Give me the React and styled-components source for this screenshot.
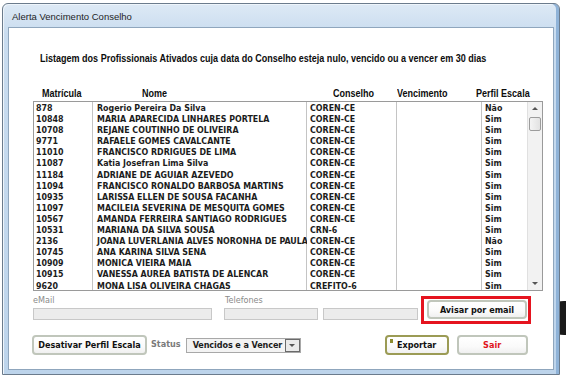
import React from "react";
import styled, { createGlobalStyle } from "styled-components";

const Global = createGlobalStyle`
  html, body { margin: 0; padding: 0; background: #ffffff; overflow: hidden; }
  * { box-sizing: border-box; }
`;

const CELL_FONT = `"DejaVu Sans Condensed", "DejaVu Sans", "Liberation Sans", sans-serif`;
const NARROW_FONT = `"Liberation Sans", Arial, sans-serif`;

const Desktop = styled.div`
  position: relative;
  width: 566px;
  height: 378px;
  padding: 3px 0 0 2px;
  background: #ffffff;
`;

const Blob = styled.div`
  position: absolute;
  left: 546px;
  top: 301px;
  width: 36px;
  height: 34px;
  border-radius: 50%;
  background: #1a1a1a;
  z-index: 0;
`;

const Window = styled.div`
  position: relative;
  z-index: 1;
  width: 558px;
  height: 372px;
  border: 1px solid #6b7b8c;
  border-radius: 6px 6px 0 0;
  background: linear-gradient(180deg, #dde9f5 0%, #c9dcef 8%, #bdd4eb 100%);
  padding: 0 5px 4px 5px;
  display: flex;
  flex-direction: column;
  box-shadow: inset -3px 0 0 #8fb3d8, inset 1px 1px 0 #eef5fb;
`;

const TitleBar = styled.div`
  height: 23px;
  display: flex;
  align-items: center;
  padding: 2px 0 0 4px;
  font-family: "Liberation Sans", sans-serif;
  font-size: 9.5px;
  color: #1e1e1e;
`;

const Client = styled.div`
  flex: 1;
  background: #ffffff;
  border: 1px solid #8fa6bd;
  display: flex;
  flex-direction: column;
  padding-left: 24px;
`;

/* Arial Narrow Bold look: Liberation Sans Bold condensed to 82% */
const Narrow = styled.span`
  display: inline-block;
  transform: scaleX(0.82);
  transform-origin: left center;
  white-space: nowrap;
`;

const Heading = styled.div`
  margin: 24px 0 0 7px;
  height: 13px;
  font-family: ${NARROW_FONT};
  font-weight: bold;
  font-size: 11px;
  line-height: 13px;
  color: #0d0d0d;
  white-space: nowrap;
`;

const HeaderRow = styled.div`
  margin: 22px 0 0 9px;
  height: 12px;
  display: flex;
  font-family: ${NARROW_FONT};
  font-weight: bold;
  font-size: 11px;
  line-height: 12px;
  color: #0d0d0d;
`;

const HeaderLabel = styled.div`
  width: ${(p) => p.$w}px;
  flex: none;
  white-space: nowrap;
`;

const Grid = styled.div`
  margin-top: 2px;
  width: 510px;
  height: 190px;
  border: 1px solid #9a9a9a;
  display: flex;
  overflow: hidden;
`;

const Rows = styled.div`
  flex: 1;
  display: flex;
  flex-direction: column;
  padding-top: 1px;
  background: linear-gradient(90deg,
    transparent 58px, #c4c4c4 58px, #c4c4c4 59px, transparent 59px,
    transparent 272px, #c4c4c4 272px, #c4c4c4 273px, transparent 273px,
    transparent 362px, #c4c4c4 362px, #c4c4c4 363px, transparent 363px,
    transparent 447px, #c4c4c4 447px, #c4c4c4 448px, transparent 448px);
`;

const Row = styled.div`
  height: 11.1px;
  flex: none;
  display: grid;
  grid-template-columns: 59px 214px 90px 85px 45px;
  font-family: ${CELL_FONT};
  font-weight: bold;
  font-size: 8.8px;
  line-height: 11px;
  color: #1c1c1c;
`;

const Cell = styled.div`
  padding-left: ${(p) => p.$pad}px;
  white-space: nowrap;
  overflow: hidden;
`;

const ScrollBar = styled.div`
  width: 15px;
  flex: none;
  background: #f2f2f2;
  border-left: 1px solid #e0e0e0;
  display: flex;
  flex-direction: column;
  align-items: center;
  padding-top: 5px;
`;

const Arrow = styled.div`
  width: 0;
  height: 0;
  border-left: 3px solid transparent;
  border-right: 3px solid transparent;
  ${(p) => (p.$down ? "border-top: 3px solid #555;" : "border-bottom: 3px solid #555;")}
`;

const Thumb = styled.div`
  margin-top: 7px;
  width: 12px;
  height: 14px;
  border: 1px solid #9c9c9c;
  border-radius: 2px;
  background: linear-gradient(90deg, #f4f4f4, #e2e2e2);
`;

const Spacer = styled.div`
  flex: 1;
`;

const BottomGap = styled.div`
  height: 5px;
  flex: none;
`;

const FormArea = styled.div`
  display: flex;
  align-items: flex-start;
  height: 33px;
`;

const Fields = styled.div`
  margin-top: 3px;
  display: grid;
  grid-template-columns: 191px 99px 95px;
  row-gap: 2px;
`;

const FieldLabel = styled.div`
  font-family: ${CELL_FONT};
  font-size: 9px;
  line-height: 12px;
  color: #8a8a8a;
  grid-column: ${(p) => p.$col};
  grid-row: 1;
  padding-left: ${(p) => p.$pad || 0}px;
`;

const Input = styled.div`
  height: 12px;
  background: #ececec;
  border: 1px solid #c8c8c8;
  grid-row: 2;
  width: ${(p) => p.$w}px;
`;

const Highlight = styled.div`
  margin: 5px 0 0 3px;
  width: 110px;
  height: 28px;
  border: 3px solid #e5141f;
  padding: 1px 0 0 3px;
`;

const Button = styled.div`
  position: relative;
  width: ${(p) => p.$w}px;
  height: ${(p) => p.$h || 20}px;
  margin-left: ${(p) => p.$ml || 0}px;
  flex: none;
  display: flex;
  align-items: center;
  justify-content: center;
  border: 2px solid ${(p) => p.$border || "#c0c6bb"};
  border-radius: 4px;
  background: linear-gradient(180deg, #ffffff 0%, #fafafa 60%, #f0f0f0 100%);
  font-family: ${CELL_FONT};
  font-weight: bold;
  font-size: 9px;
  color: ${(p) => p.$color || "#111"};
  white-space: nowrap;
`;

const FocusDot = styled.div`
  position: absolute;
  left: 3px;
  top: 2px;
  width: 3px;
  height: 4px;
  background: #8c8c30;
`;

const BottomRow = styled.div`
  margin-top: 11px;
  margin-left: -1px;
  display: flex;
  align-items: center;
  height: 20px;
`;

const StatusLabel = styled.div`
  margin-left: 4px;
  font-family: ${CELL_FONT};
  font-weight: bold;
  font-size: 9px;
  color: #7a7a7a;
  margin-top: -2px;
`;

const Combo = styled.div`
  margin-left: 5px;
  width: 115px;
  height: 15px;
  display: flex;
  align-items: stretch;
  border: 1px solid #a8a8a8;
  background: #f3f3f3;
`;

const ComboText = styled.div`
  flex: 1;
  padding-left: 6px;
  font-family: ${CELL_FONT};
  font-weight: bold;
  font-size: 9px;
  letter-spacing: -0.1px;
  line-height: 13px;
  color: #1c1c1c;
  white-space: nowrap;
  overflow: hidden;
`;

const ComboButton = styled.div`
  width: 15px;
  border: 1px solid #6a6a6a;
  background: #eaeaea;
  display: flex;
  align-items: center;
  justify-content: center;
`;

const rows = [
  ["878", "Rogerio Pereira Da Silva", "COREN-CE", "Não"],
  ["10848", "MARIA APARECIDA LINHARES PORTELA", "COREN-CE", "Sim"],
  ["10708", "REJANE COUTINHO DE OLIVEIRA", "COREN-CE", "Sim"],
  ["9771", "RAFAELE GOMES CAVALCANTE", "COREN-CE", "Sim"],
  ["11010", "FRANCISCO RDRIGUES DE LIMA", "COREN-CE", "Sim"],
  ["11087", "Katia Josefran Lima Silva", "COREN-CE", "Sim"],
  ["11184", "ADRIANE DE AGUIAR AZEVEDO", "COREN-CE", "Sim"],
  ["11094", "FRANCISCO RONALDO BARBOSA MARTINS", "COREN-CE", "Sim"],
  ["10935", "LARISSA ELLEN DE SOUSA FACANHA", "COREN-CE", "Sim"],
  ["11097", "MACILEIA SEVERINA DE MESQUITA GOMES", "COREN-CE", "Sim"],
  ["10567", "AMANDA FERREIRA SANTIAGO RODRIGUES", "COREN-CE", "Sim"],
  ["10531", "MARIANA DA SILVA SOUSA", "CRN-6", "Sim"],
  ["2136", "JOANA LUVERLANIA ALVES NORONHA DE PAULA", "COREN-CE", "Não"],
  ["10745", "ANA KARINA SILVA SENA", "COREN-CE", "Sim"],
  ["10909", "MONICA VIEIRA MAIA", "COREN-CE", "Sim"],
  ["10915", "VANESSA AUREA BATISTA DE ALENCAR", "COREN-CE", "Sim"],
  ["9620", "MONA LISA OLIVEIRA CHAGAS", "CREFITO-6", "Sim"],
];

const headers = [
  ["Matrícula", 100],
  ["Nome", 191],
  ["Conselho", 64],
  ["Vencimento", 79],
  ["Perfil Escala", 70],
];

export default function App() {
  return (
    <Desktop>
      <Global />
      <Blob />
      <Window>
        <TitleBar>Alerta Vencimento Conselho</TitleBar>
        <Client>
          <Heading>
            <Narrow>
              Listagem dos Profissionais Ativados cuja data do Conselho esteja nulo, vencido ou a vencer em 30 dias
            </Narrow>
          </Heading>
          <HeaderRow>
            {headers.map(([label, w]) => (
              <HeaderLabel key={label} $w={w}>
                <Narrow>{label}</Narrow>
              </HeaderLabel>
            ))}
          </HeaderRow>
          <Grid>
            <Rows>
              {rows.map((r) => (
                <Row key={r[0]}>
                  <Cell $pad={2}>{r[0]}</Cell>
                  <Cell $pad={4}>{r[1]}</Cell>
                  <Cell $pad={3}>{r[2]}</Cell>
                  <Cell $pad={3}></Cell>
                  <Cell $pad={3}>{r[3]}</Cell>
                </Row>
              ))}
            </Rows>
            <ScrollBar>
              <Arrow />
              <Thumb />
              <Spacer />
              <Arrow $down />
              <BottomGap />
            </ScrollBar>
          </Grid>
          <FormArea>
            <Fields>
              <FieldLabel $col={1}>eMail</FieldLabel>
              <FieldLabel $col={2} $pad={1}>Telefones</FieldLabel>
              <Input $w={179} />
              <Input $w={94} />
              <Input $w={95} />
            </Fields>
            <Highlight>
              <Button $w={100} $h={19}>Avisar por email</Button>
            </Highlight>
          </FormArea>
          <BottomRow>
            <Button $w={115}>Desativar Perfil Escala</Button>
            <StatusLabel>Status</StatusLabel>
            <Combo>
              <ComboText>Vencidos e a Vencer</ComboText>
              <ComboButton>
                <Arrow $down />
              </ComboButton>
            </Combo>
            <Button $w={64} $ml={84} $border="#9b9b55">
              <FocusDot />
              Exportar
            </Button>
            <Button $w={71} $ml={8} $color="#e0141c">Sair</Button>
          </BottomRow>
        </Client>
      </Window>
    </Desktop>
  );
}
